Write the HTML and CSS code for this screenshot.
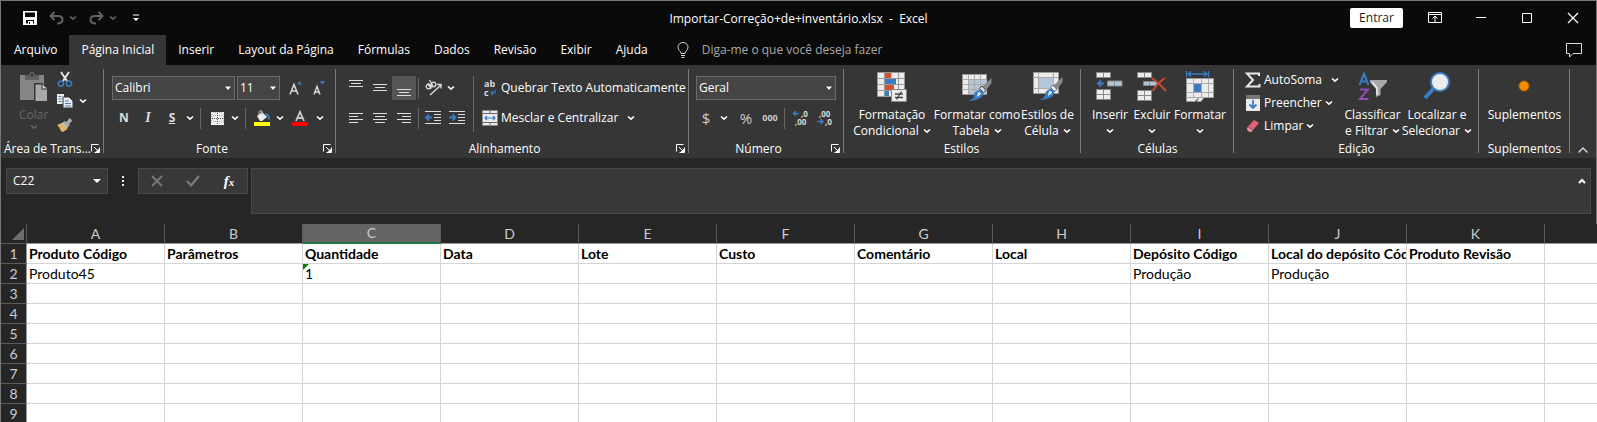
FILE: index.html
```html
<!DOCTYPE html>
<html lang="pt-BR">
<head>
<meta charset="utf-8">
<title>Importar-Correção+de+inventário.xlsx - Excel</title>
<link rel="stylesheet" href="styles.css">
</head>
<body>
<svg class="symbols" aria-hidden="true">
  <symbol id="chev" viewBox="0 0 8 8"><path d="M1 2.5 4 5.2 7 2.5" fill="none" stroke="currentColor" stroke-width="1.6"/></symbol>
  <symbol id="tri" viewBox="0 0 8 8"><path d="M1 2.5h6L4 6z" fill="currentColor"/></symbol>
  <symbol id="launch" viewBox="0 0 9 9"><path d="M.5 7.500V.5h7M3 3l4 4M8.500 3.500v5h-5" fill="none" stroke="currentColor"/><path d="M8 4.500V8H4.500z" fill="currentColor"/></symbol>
</svg>

<div class="window">
  <header class="titlebar">
    <div class="quick">
      <button class="qbtn" aria-label="Salvar"><svg width="14" height="14" viewBox="0 0 14 14"><path fill-rule="evenodd" fill="#fff" d="M0 0h14v14H0zM2 1.500v4.500h10V1.500zM3 9v3.500h2V10h5v2.500h1V9zM6 11v2h1v-2z"/></svg></button>
      <button class="qbtn dim" aria-label="Desfazer"><svg width="15" height="14" viewBox="0 0 15 14"><path d="M5.500 1 1.500 5l4 4M1.500 5H9c3 0 4.500 1.500 4.500 3.700S11.500 12.500 8 12.500" fill="none" stroke="#636363" stroke-width="2"/></svg><svg width="8" height="8"><use href="#chev"/></svg></button>
      <button class="qbtn dim" aria-label="Refazer"><svg width="15" height="14" viewBox="0 0 15 14"><path d="m9.500 1 4 4-4 4M13.500 5H6C3 5 1.500 6.500 1.500 8.700s2 3.800 5.500 3.800" fill="none" stroke="#636363" stroke-width="2"/></svg><svg width="8" height="8"><use href="#chev"/></svg></button>
      <button class="qbtn" aria-label="Personalizar barra"><svg width="6" height="8" viewBox="0 0 6 8"><path d="M0 1h6" stroke="#fff" /><path d="M0 4h6L3 7z" fill="#fff"/></svg></button>
    </div>
    <div class="doc-title">Importar-Correção+de+inventário.xlsx&nbsp; -&nbsp; Excel</div>
    <div class="controls">
      <button class="signin">Entrar</button>
      <button class="wbtn" aria-label="Opções da faixa"><svg width="14" height="12" viewBox="0 0 14 12"><path d="M.5.5h13v10H.5zM.5 2.500h13M7 10V4M4.500 6.500 7 4l2.500 2.500" fill="none" stroke="#fff"/></svg></button>
      <button class="wbtn" aria-label="Minimizar"><svg width="10" height="10" viewBox="0 0 10 10"><path d="M0 4.500h10" stroke="#fff"/></svg></button>
      <button class="wbtn" aria-label="Maximizar"><svg width="10" height="10" viewBox="0 0 10 10"><path d="M.5.5h9v9h-9z" fill="none" stroke="#fff"/></svg></button>
      <button class="wbtn" aria-label="Fechar"><svg width="10" height="10" viewBox="0 0 10 10"><path d="m0 0 10 10M10 0 0 10" stroke="#fff" stroke-width="1.200"/></svg></button>
    </div>
  </header>

  <nav class="tabs">
    <button class="tab">Arquivo</button>
    <button class="tab active">Página Inicial</button>
    <button class="tab">Inserir</button>
    <button class="tab">Layout da Página</button>
    <button class="tab">Fórmulas</button>
    <button class="tab">Dados</button>
    <button class="tab">Revisão</button>
    <button class="tab">Exibir</button>
    <button class="tab">Ajuda</button>
    <button class="tell"><svg width="12" height="16" viewBox="0 0 12 16"><path d="M4 11.500C4 9 1 8.500 1 5.200a5 4.700 0 0 1 10 0C11 8.500 8 9 8 11.500zM4 13.500h4M4.500 15.500h3" fill="none" stroke="#d0d0d0"/></svg>Diga-me o que você deseja fazer</button>
    <button class="comment" aria-label="Comentários"><svg width="16" height="15" viewBox="0 0 16 15"><path d="M.5.5h15v10H7L3.500 14v-3.500h-3z" fill="none" stroke="#ddd"/></svg></button>
  </nav>

  <section class="ribbon">
    <div class="group">
      <div class="body clip">
        <button class="big paste"><svg width="28" height="30" viewBox="0 0 28 30"><path d="M0 3h24v25H0z" fill="#868688"/><path d="M5 3h4c0-4 6-4 6 0h4v5H5z" fill="#606060"/><circle cx="12" cy="3" r="1.500" fill="#363636"/><path d="M14 11h8l6 6v13H14z" fill="#363636"/><path d="M15.500 12.500h6v5h5.500v11.500H15.500z" fill="#a8a8aa"/><path d="m22.500 12.500 4.500 4h-4.500z" fill="#d0d0d0"/></svg><span>Colar</span><svg width="8" height="8"><use href="#chev"/></svg></button>
        <div class="clip-tools">
          <button aria-label="Recortar"><svg width="16" height="16" viewBox="0 0 16 16"><path d="M4 1l6 9M12 1 6 10" stroke="#e4e4e4" stroke-width="2"/><circle cx="4" cy="12.500" r="2.600" fill="none" stroke="#3a7cc4" stroke-width="1.500"/><circle cx="12" cy="12.500" r="2.600" fill="none" stroke="#3a7cc4" stroke-width="1.500"/></svg></button>
          <button aria-label="Copiar"><svg width="16" height="16" viewBox="0 0 16 16"><path d="M0 1h7v10H0z" fill="#ececec"/><path d="M6 4h6l4 4v7H6z" fill="#ececec" stroke="#363636"/><path d="M1.500 3.500h3M1.500 6h3M1.500 8.500h3M8 8h4M8 10.500h6M8 13h6" stroke="#3a7cc4"/></svg><svg width="8" height="8"><use href="#chev"/></svg></button>
          <button aria-label="Pincel de formatação"><svg width="16" height="16" viewBox="0 0 16 16"><path d="M12.500 1 15.500 3.500 12 7l1 1-3 3-5-5 2.500-2 2 1z" fill="#aaa"/><path d="m4.500 6 6 6L6 15l-2-1-2-4-2-2z" fill="#e2b76c"/><path d="m5 6 5.500 5" stroke="#eee"/></svg></button>
        </div>
      </div>
      <div class="label">Área de Trans...</div>
      <button class="launcher" aria-label="Mais opções"><svg width="9" height="9"><use href="#launch"/></svg></button>
    </div>

    <div class="group">
      <div class="body lines font">
        <div class="row">
          <label class="pick name"><select aria-label="Fonte"><option>Calibri</option></select><svg width="8" height="8"><use href="#tri"/></svg></label>
          <label class="pick size"><select aria-label="Tamanho"><option>11</option></select><svg width="8" height="8"><use href="#tri"/></svg></label>
          <button class="grow" aria-label="Aumentar fonte"><svg width="14" height="16" viewBox="0 0 14 16"><path d="m1 14.500 4-10 4 10M2.500 11h5" fill="none" stroke="#ddd" stroke-width="1.500"/><path d="M8 4.500h5L10.500 1z" fill="#3a7cc4"/></svg></button>
          <button class="grow" aria-label="Diminuir fonte"><svg width="14" height="16" viewBox="0 0 14 16"><path d="m1 14.500 3-8 3 8M2 12h4" fill="none" stroke="#ddd" stroke-width="1.400"/><path d="M7 1h5l-2.500 3.500z" fill="#3a7cc4"/></svg></button>
        </div>
        <div class="row">
          <button class="w24 b">N</button><button class="w24 i">I</button><button class="w24 u">S</button><button class="w12"><svg width="8" height="8"><use href="#chev"/></svg></button><i class="sep"></i>
          <button class="w24" aria-label="Bordas"><svg width="13" height="13" viewBox="0 0 13 13"><path d="M0 0h13v13H0z" fill="#eee"/><path d="M2 .5h10M.5 2v9M12.500 2v9M2 3.500h9M2 9.500h9" stroke="#888" stroke-width=".6" stroke-dasharray="1 1"/><path d="M1 6.500h11M6.500 1v11" stroke="#555" stroke-dasharray="1 1"/><path d="M0 12.500h13" stroke="#fff"/></svg></button><button class="w12"><svg width="8" height="8"><use href="#chev"/></svg></button><i class="sep"></i>
          <button class="w24" aria-label="Cor de preenchimento"><svg width="17" height="16" viewBox="0 0 17 16"><path d="M3 6 8 2l5 5-5 4H6z" fill="#ececec"/><path d="M5 5V2q0-2 3-1v4" fill="none" stroke="#bbb"/><path d="M11 4.500q4-.5 4 5" fill="none" stroke="#3a7cc4" stroke-width="2"/><path d="M0 12h16v4H0z" fill="#ff0"/></svg></button><button class="w12"><svg width="8" height="8"><use href="#chev"/></svg></button>
          <button class="w28" aria-label="Cor da fonte"><svg width="16" height="16" viewBox="0 0 16 16"><path d="M4 11 8 2l4 9M5.500 8h5" fill="none" stroke="#ccc" stroke-width="1.800"/><path d="M0 12h16v4H0z" fill="red"/></svg></button><button class="w12"><svg width="8" height="8"><use href="#chev"/></svg></button>
        </div>
      </div>
      <div class="label shared">Fonte</div>
      <button class="launcher" aria-label="Mais opções"><svg width="9" height="9"><use href="#launch"/></svg></button>
    </div>

    <div class="group">
      <div class="body align">
        <div class="lines">
          <div class="row">
            <button class="w24" aria-label="Alinhar em cima"><svg width="14" height="18" viewBox="0 0 14 18"><path d="M0 1.500h14M2 4.500h10M0 7.500h14" stroke="#ddd"/></svg></button>
            <button class="w24" aria-label="Alinhar no meio"><svg width="14" height="18" viewBox="0 0 14 18"><path d="M0 5.500h14M2 8.500h10M0 11.500h14" stroke="#ddd"/></svg></button>
            <button class="w24 pressed" aria-label="Alinhar embaixo"><svg width="14" height="18" viewBox="0 0 14 18"><path d="M0 10.500h14M2 13.500h10M0 16.500h14" stroke="#ddd"/></svg></button><i class="sep"></i>
            <button class="w24" aria-label="Orientação"><svg width="17" height="16" viewBox="0 0 17 16"><g fill="none" stroke="#ddd" stroke-width="1.300"><circle cx="3.500" cy="6.500" r="2.300"/><path d="m2.500 3.500 4 5"/><circle cx="8.500" cy="4.500" r="2.300"/><path d="M4.500 0 8 6M5 15 16 5M12 4.500h4v4"/></g></svg></button><button class="w12"><svg width="8" height="8"><use href="#chev"/></svg></button>
          </div>
          <div class="row">
            <button class="w24" aria-label="Esquerda"><svg width="14" height="12" viewBox="0 0 14 12"><path d="M0 1.500h14M0 4.500h9M0 7.500h14M0 10.500h9" stroke="#ddd"/></svg></button>
            <button class="w24" aria-label="Centro"><svg width="14" height="12" viewBox="0 0 14 12"><path d="M0 1.500h14M2 4.500h10M0 7.500h14M2 10.500h10" stroke="#ddd"/></svg></button>
            <button class="w24" aria-label="Direita"><svg width="14" height="12" viewBox="0 0 14 12"><path d="M0 1.500h14M5 4.500h9M0 7.500h14M5 10.500h9" stroke="#ddd"/></svg></button><i class="sep"></i>
            <button class="w24" aria-label="Diminuir recuo"><svg width="16" height="14" viewBox="0 0 16 14"><path d="M0 .5h16M9 3.500h7M9 6.500h7M9 9.500h7M0 12.500h16" stroke="#ddd"/><path d="M7 6.500H1.500M4 3.500l-3 3 3 3" fill="none" stroke="#3a7cc4" stroke-width="2"/></svg></button>
            <button class="w24" aria-label="Aumentar recuo"><svg width="16" height="14" viewBox="0 0 16 14"><path d="M0 .5h16M9 3.500h7M9 6.500h7M9 9.500h7M0 12.500h16" stroke="#ddd"/><path d="M0 6.500h6M3.500 3.500l3 3-3 3" fill="none" stroke="#3a7cc4" stroke-width="2"/></svg></button>
          </div>
        </div>
        <i class="sep tall"></i>
        <div class="lines wide">
          <button class="row"><svg width="16" height="18" viewBox="0 0 16 18"><text x="2" y="8" class="glyph">ab</text><text x="2" y="17" class="glyph">c</text><path d="M13 11v3H9M11 12l-2 2 2 2" fill="none" stroke="#3a7cc4" stroke-width="1.200"/></svg>Quebrar Texto Automaticamente</button>
          <button class="row"><svg width="16" height="16" viewBox="0 0 16 16"><path d="M.5.5h15v15H.5z" fill="#ececec" stroke="#888"/><path d="M1 3.500h14M1 12.500h14M8 1v2M8 13v2" stroke="#666"/><path d="M3 8h10M5 6 3 8l2 2M11 6l2 2-2 2" fill="none" stroke="#3a7cc4" stroke-width="1.200"/></svg>Mesclar e Centralizar<svg class="far" width="8" height="8"><use href="#chev"/></svg></button>
        </div>
      </div>
      <div class="label shared">Alinhamento</div>
      <button class="launcher" aria-label="Mais opções"><svg width="9" height="9"><use href="#launch"/></svg></button>
    </div>

    <div class="group">
      <div class="body lines number">
        <div class="row"><label class="pick general"><select aria-label="Formato"><option>Geral</option></select><svg width="8" height="8"><use href="#tri"/></svg></label></div>
        <div class="row">
          <button class="w20 sym">$</button><button class="w16"><svg width="8" height="8"><use href="#chev"/></svg></button><button class="w28 sym">%</button><button class="w20 zeros">000</button><i class="sep"></i>
          <button class="w24" aria-label="Aumentar casas"><svg width="16" height="16" viewBox="0 0 16 16"><text x="8" y="7" class="digits">,0</text><text x="2" y="15" class="digits">,00</text><path d="M6 3.500H.5M3 1 .5 3.500 3 6" fill="none" stroke="#3a7cc4" stroke-width="1.500"/></svg></button>
          <button class="w24" aria-label="Diminuir casas"><svg width="16" height="16" viewBox="0 0 16 16"><text x="2" y="7" class="digits">,00</text><text x="8" y="15" class="digits">,0</text><path d="M0 11.500h6M3.500 9 6 11.500 3.500 14" fill="none" stroke="#3a7cc4" stroke-width="1.500"/></svg></button>
        </div>
      </div>
      <div class="label shared">Número</div>
      <button class="launcher" aria-label="Mais opções"><svg width="9" height="9"><use href="#launch"/></svg></button>
    </div>

    <div class="group">
      <div class="body styles">
        <button class="big"><svg width="30" height="30" viewBox="0 0 30 30"><path d="M.5.5h27v24H.5z" fill="#ececec" stroke="#999"/><path d="M7.500 0v24M21.500 0v24M14 0v6M0 6.500h28M0 12.500h28M0 18.500h28" stroke="#999"/><path d="M8 1h6v5H8zM8 13h9v5H8z" fill="#d35230"/><path d="M8 7h11v5H8zM8 19h4v5H8z" fill="#3a7cc4"/><path d="M14.500 17.500h15v12h-15z" fill="#ececec" stroke="#888"/><path d="M18 22h8M18 25.500h8M24.500 19.500l-5 8" stroke="#444" stroke-width="1.300"/></svg><span>Formatação<br>Condicional<svg width="8" height="8"><use href="#chev"/></svg></span></button>
        <button class="big"><svg width="30" height="30" viewBox="0 0 30 30"><path d="M.5 2.500h24v20H.5z" fill="#ececec" stroke="#999"/><path d="M7 8h18v14H7z" fill="#b3c6da"/><path d="M6.500 2v20M12.500 2v20M18.500 2v20M0 7.500h25M0 12.500h25M0 17.500h25" stroke="#aaa"/><path d="M29.500 6 20 15l3.500 4 6-8z" fill="#888"/><path d="m20 14 4 4.500-2.500 2-4-4z" fill="#ddd" stroke="#444"/><path d="M17 18q4 0 4.500 3-.5 7-15.500 8 6-2 6-6 1-4 5-5z" fill="#3a7cc4"/><path d="M16 20q3 0 3 2l-4 3z" fill="#e8f0fa"/></svg><span>Formatar como<br>Tabela<svg width="8" height="8"><use href="#chev"/></svg></span></button>
        <button class="big"><svg width="30" height="30" viewBox="0 0 30 30"><path d="M.5.5h25v21H.5z" fill="#ececec" stroke="#999"/><path d="M5 6h15v11H5z" fill="#b3c6da"/><path d="M5.500 0v22M20.500 0v22M0 5.500h25M0 16.500h25" stroke="#aaa"/><path d="M29.500 5 20 14l3.500 4 6-8z" fill="#888"/><path d="m20 13 4 4.500-2.500 2-4-4z" fill="#eee" stroke="#666"/><path d="M17 17q4 0 4.500 3-.5 7-15.500 8 6-2 6-6 1-4 5-5z" fill="#3a7cc4"/><path d="M16 19q3 0 3 2l-4 3z" fill="#e8f0fa"/></svg><span>Estilos de<br>Célula<svg width="8" height="8"><use href="#chev"/></svg></span></button>
      </div>
      <div class="label">Estilos</div>
    </div>

    <div class="group">
      <div class="body cells">
        <button class="big"><svg width="28" height="30" viewBox="0 0 28 30"><path d="M.5.500h14v5H.5zM.5 17.500h14v10H.5zM.5 22.500h14M7.500.5v5M7.500 17.500v10" fill="#ececec" stroke="#888"/><path d="M11.500 9h14.500v5H11.500zM18.500 9v5" fill="#b3c6da" stroke="#888"/><path d="M8 11.500H2M5 8.500l-3 3 3 3" fill="none" stroke="#3a7cc4" stroke-width="1.800"/></svg><span>Inserir<br><svg width="8" height="8"><use href="#chev"/></svg></span></button>
        <button class="big"><svg width="30" height="30" viewBox="0 0 30 30"><path d="M.5.500h14v5H.5zM.5 18.500h14v10H.5zM.5 23.500h14M7.500.5v5M7.500 18.500v10" fill="#ececec" stroke="#888"/><path d="M6.500 9.500H20v4H6.500zM12.500 9.500v4" fill="#b3c6da" stroke="#888"/><path d="M15 6q8 6 14 13M28 6Q20 11 16 19" fill="none" stroke="#c8492c" stroke-width="2"/></svg><span>Excluir<br><svg width="8" height="8"><use href="#chev"/></svg></span></button>
        <button class="big"><svg width="28" height="32" viewBox="0 0 28 32"><path d="M.5 0v6M22.500 0v6M2 3h19M5 .5 2 3l3 2.500M18 .5 21 3l-3 2.500" fill="none" stroke="#3a7cc4" stroke-width="1.300"/><path d="M.5 7.500h27v19H18l-3 4h-4l2-4-4 4H.5z" fill="#ececec" stroke="#999"/><path d="M7.500 7v20M15.500 7v20M22.500 7v20M0 12.500h28M0 21.500h28M0 26.500h28" stroke="#aaa"/><path d="M8 13h7v8H8z" fill="#3a7cc4"/></svg><span>Formatar<br><svg width="8" height="8"><use href="#chev"/></svg></span></button>
      </div>
      <div class="label">Células</div>
    </div>

    <div class="group">
      <div class="body edit">
        <div class="stack">
          <button><svg width="16" height="16" viewBox="0 0 16 16"><path d="M14 4V1.500H2L8 8l-6 6.500h12.500V12" fill="none" stroke="#e8e8e8" stroke-width="2"/></svg>AutoSoma<svg class="far" width="8" height="8"><use href="#chev"/></svg></button>
          <button><svg width="16" height="16" viewBox="0 0 16 16"><path d="M1 0h14v16H1z" fill="#ececec"/><path d="M1 0h14v4H1z" fill="#777"/><path d="M8 5v8M4.500 9.500 8 13l3.500-3.500" fill="none" stroke="#3a7cc4" stroke-width="1.800"/></svg>Preencher<svg width="8" height="8"><use href="#chev"/></svg></button>
          <button><svg width="16" height="16" viewBox="0 0 16 16"><path d="m9 2 5 3-6 7-5-3.500z" fill="#e0637b"/><path d="m3 9 5 3.500L6 14q-4 0-4-4z" fill="#f08c9f"/></svg>Limpar<svg width="8" height="8"><use href="#chev"/></svg></button>
        </div>
        <button class="big"><svg width="30" height="30" viewBox="0 0 30 30"><path d="M1.500 13 6 2l4.500 11M3 9.500h6" fill="none" stroke="#3a7cc4" stroke-width="2"/><path d="M2 17.500h8L2 27h8.500" fill="none" stroke="#8e4fb0" stroke-width="2"/><path d="M12 8h17v2l-6.500 7v6L18 25v-8l-6-7z" fill="#a8a8aa"/><path d="m14 10 5 6v7" fill="none" stroke="#eee" stroke-width="1.500"/></svg><span>Classificar<br>e Filtrar<svg width="8" height="8"><use href="#chev"/></svg></span></button>
        <button class="big"><svg width="28" height="30" viewBox="0 0 28 30"><path d="m12 15-10 11" stroke="#3a7cc4" stroke-width="4"/><circle cx="17" cy="10" r="9" fill="#ececec" stroke="#3a7cc4" stroke-width="2"/></svg><span>Localizar e<br>Selecionar<svg width="8" height="8"><use href="#chev"/></svg></span></button>
      </div>
      <div class="label">Edição</div>
    </div>

    <div class="group">
      <div class="body center">
        <button class="big"><svg width="28" height="30" viewBox="0 0 28 30"><circle cx="14" cy="14" r="5.500" fill="#a85c00"/><circle cx="14" cy="14" r="4.500" fill="#f58b00"/></svg><span>Suplementos</span></button>
      </div>
      <div class="label">Suplementos</div>
    </div>
    <button class="collapse" aria-label="Recolher"><svg width="10" height="6" viewBox="0 0 10 6"><path d="m.5 5.500 4.500-4.500 4.500 4.500" fill="none" stroke="#ddd" stroke-width="1.300"/></svg></button>
  </section>

  <section class="formula">
    <button class="namebox">C22<svg width="8" height="6" viewBox="0 0 8 6"><path d="M0 1h8L4 5z" fill="#fff"/></svg></button>
    <svg class="dots" width="2" height="12" viewBox="0 0 2 12"><path d="M0 1h2v2H0zM0 5h2v2H0zM0 9h2v2H0z" fill="#eee"/></svg>
    <div class="fxbox">
      <button aria-label="Cancelar"><svg width="12" height="12" viewBox="0 0 12 12"><path d="m1 1 10 10M11 1 1 11" stroke="#777" stroke-width="2"/></svg></button>
      <button aria-label="Inserir"><svg width="14" height="12" viewBox="0 0 14 12"><path d="m1 6 4 4.500L13 1" fill="none" stroke="#777" stroke-width="2.400"/></svg></button>
      <button class="fx" aria-label="Inserir função">f<small>x</small></button>
    </div>
    <div class="entry"><input type="text" aria-label="Barra de fórmulas"><button aria-label="Recolher barra"><svg width="8" height="6" viewBox="0 0 8 6"><path d="m1 5 3-3 3 3" fill="none" stroke="#fff" stroke-width="2"/></svg></button></div>
  </section>

  <table class="sheet">
    <colgroup><col class="rowcol"><col span="11" class="datacol"><col></colgroup>
    <thead>
      <tr><th class="corner"><svg width="12" height="12" viewBox="0 0 12 12"><path d="M12 0v12H0z" fill="#6e6e6e"/></svg></th><th>A</th><th>B</th><th class="selected">C</th><th>D</th><th>E</th><th>F</th><th>G</th><th>H</th><th>I</th><th>J</th><th>K</th><th></th></tr>
    </thead>
    <tbody>
      <tr class="heads"><th>1</th><td>Produto Código</td><td>Parâmetros</td><td>Quantidade</td><td>Data</td><td>Lote</td><td>Custo</td><td>Comentário</td><td>Local</td><td>Depósito Código</td><td>Local do depósito Cód</td><td>Produto Revisão</td><td></td></tr>
      <tr><th>2</th><td>Produto45</td><td></td><td class="flag">1</td><td></td><td></td><td></td><td></td><td></td><td>Produção</td><td>Produção</td><td></td><td></td></tr>
      <tr><th>3</th><td></td><td></td><td></td><td></td><td></td><td></td><td></td><td></td><td></td><td></td><td></td><td></td></tr>
      <tr><th>4</th><td></td><td></td><td></td><td></td><td></td><td></td><td></td><td></td><td></td><td></td><td></td><td></td></tr>
      <tr><th>5</th><td></td><td></td><td></td><td></td><td></td><td></td><td></td><td></td><td></td><td></td><td></td><td></td></tr>
      <tr><th>6</th><td></td><td></td><td></td><td></td><td></td><td></td><td></td><td></td><td></td><td></td><td></td><td></td></tr>
      <tr><th>7</th><td></td><td></td><td></td><td></td><td></td><td></td><td></td><td></td><td></td><td></td><td></td><td></td></tr>
      <tr><th>8</th><td></td><td></td><td></td><td></td><td></td><td></td><td></td><td></td><td></td><td></td><td></td><td></td></tr>
      <tr><th>9</th><td></td><td></td><td></td><td></td><td></td><td></td><td></td><td></td><td></td><td></td><td></td><td></td></tr>
    </tbody>
  </table>
</div>
</body>
</html>
```
FILE: styles.css
```css
* { box-sizing: border-box; }
html { overflow: hidden; }
body { margin: 0; background: #262626; color: #fff; font: 12px/16px "Open Sans", "Noto Sans", sans-serif; }
button { margin: 0; padding: 0; border: 0; background: none; color: inherit; font: inherit; white-space: nowrap; }
svg { display: block; flex: none; overflow: visible; }
.symbols { position: absolute; width: 0; height: 0; }
.window { border-top: 1px solid #777; }

.titlebar { display: grid; grid-template-columns: 1fr auto 1fr; align-items: center; height: 34px; background: #0a0a0a; border-left: 1px solid #777; border-right: 1px solid #777; }
.quick { display: flex; align-items: center; gap: 12px; padding-left: 22px; }
.qbtn { display: flex; align-items: center; gap: 5px; height: 24px; }
.qbtn:last-child { margin-left: 4px; }
.dim { color: #636363; }
.doc-title { padding-top: 2px; }
.controls { display: flex; justify-content: flex-end; align-items: center; }
.signin { width: 53px; height: 20px; margin-right: 9px; background: #fff; color: #222; border-radius: 2px; }
.wbtn { display: grid; place-items: center; width: 46px; height: 30px; }

.tabs { display: flex; height: 30px; padding-left: 1px; background: #0a0a0a; border-left: 1px solid #777; border-right: 1px solid #777; }
.tab { padding: 0 12px; }
.tab.active { background: #363636; }
.tell { display: flex; align-items: center; gap: 13px; margin-left: 17px; color: #a8a8a8; }
.comment { margin-left: auto; padding-right: 14px; }

.ribbon { display: grid; grid-template-columns: 103px 232px 353px 155px 237px 153px 245px 91px 1fr; height: 93px; background: #363636; border-left: 1px solid #777; border-right: 1px solid #777; }
.group { position: relative; display: grid; grid-template-rows: 76px 16px; min-width: 0; }
.group::after { content: ""; position: absolute; top: 4px; bottom: 5px; right: 0; width: 1px; background: #7a7a7a; }
.label { text-align: center; }
.shared { padding-right: 16px; }
.launcher { position: absolute; right: 4px; bottom: 5px; }
.body { display: flex; min-width: 0; }
.body button { display: flex; align-items: center; justify-content: center; }
.body .big { flex-direction: column; justify-content: flex-start; line-height: 16px; }
.big > svg:first-child { height: 32px; margin-bottom: 4px; }
.big span { text-align: center; }
.big span svg { display: inline-block; margin-left: 4px; }
.cells .big span svg { margin-left: 0; }

.clip { padding: 6px 0 0 18px; gap: 9px; }
.body .paste { color: #666; }
.clip-tools { display: grid; grid-template-rows: 16px 28px 20px; justify-items: start; }
.clip-tools button { gap: 6px; }
.clip .paste, .clip-tools { height: 68px; }
.clip + .label { padding-left: 3px; text-align: left; }

.lines { display: grid; grid-template-rows: 24px 24px; row-gap: 6px; align-content: start; }
.body.lines, .align { padding-top: 11px; }
.row { display: flex; align-items: center; height: 24px; }
.font { padding-left: 8px; }
.number { padding-left: 7px; }
.pick { position: relative; display: flex; height: 24px; }
.pick select { width: 100%; padding: 0 2px; appearance: none; border: 1px solid #6a6a6a; border-radius: 0; background: #444; color: #fff; font: inherit; }
.pick svg { position: absolute; right: 3px; top: 8px; }
.name { width: 123px; margin-right: 2px; }
.size { width: 43px; margin-right: 4px; }
.general { width: 140px; }
.grow { width: 24px; }
.w12 { width: 12px; height: 24px; }
.w16 { width: 16px; height: 24px; }
.w20 { width: 20px; height: 24px; }
.w24 { width: 24px; height: 24px; }
.w28 { width: 28px; height: 24px; }
.row .b, .row .u { font-weight: 700; color: #ddd; }
.row .i { font: italic 700 14px "Liberation Serif", serif; color: #ddd; }
.row .u { text-decoration: underline; }
.pressed { background: #555; }
.sep { flex: none; width: 1px; height: 21px; background: #666; margin: 0 4px; }
.align .sep { margin: 0 2px; }
.align .tall { height: 56px; margin: 0 8px 0 4px; }
.align { padding-left: 8px; }
.align .wide .row { justify-content: flex-start; gap: 3px; }
.far { margin-left: 6px; }
.glyph { font: 700 9px "Open Sans", sans-serif; fill: #ddd; }
.digits { font: 700 8px "Open Sans", sans-serif; fill: #ddd; }
.row .sym { font-size: 15px; color: #ccc; }
.row .zeros { font-size: 9px; font-weight: 700; color: #ccc; }
.styles { padding: 6px 0 0 5px; display: grid; grid-template-columns: 86px 84px 57px; }
.styles + .label { padding-right: 2px; }
.cells { padding: 6px 0 0 8px; display: grid; grid-template-columns: 42px 42px 54px; }
.edit { padding: 3px 0 0 11px; display: grid; grid-template-columns: 96px 63px 66px; }
.edit > .big { padding-top: 3px; }
.stack { display: grid; grid-template-rows: 23px 23px 23px; justify-items: start; align-content: start; }
.stack button { gap: 3px; }
.center { justify-content: center; padding-top: 6px; }
.collapse { align-self: end; justify-self: start; padding: 0 0 5px 8px; }

.formula { display: grid; grid-template-columns: 102px 30px 110px 1fr; align-items: start; height: 66px; padding: 10px 5px 0; border: solid #777; border-width: 0 1px; background: #262626; }
.namebox { display: flex; align-items: center; justify-content: space-between; height: 26px; padding: 0 6px; border: 1px solid #484848; background: #383838; }
.dots { justify-self: center; margin-top: 7px; }
.fxbox { display: grid; grid-template-columns: 1fr 1fr 1fr; height: 26px; border: 1px solid #484848; background: #383838; }
.fxbox button { display: grid; place-items: center; }
.fxbox .fx { display: block; font: italic 700 15px "Liberation Serif", serif; }
.fx small { font-size: 11px; }
.entry { display: flex; align-items: flex-start; height: 46px; margin-left: 3px; border: 1px solid #484848; background: #383838; }
.entry input { flex: 1; min-width: 0; height: 100%; border: 0; outline: 0; background: none; color: #fff; font: inherit; }
.entry button { padding: 9px 4px; }

.sheet { width: 100%; table-layout: fixed; border-collapse: separate; border-spacing: 0; border-left: 1px solid #777; background: #fff; color: #000; font: 14px/19px Lato, "Open Sans", sans-serif; }
.rowcol { width: 26px; }
.datacol { width: 138px; }
.sheet th { height: 20px; padding: 0; border-right: 1px solid #5a5a5a; border-bottom: 1px solid #5a5a5a; background: #262626; color: #ccc; font-weight: 400; }
.sheet tbody th { border-right-color: #999; }
.sheet thead th { border-bottom-color: #999; }
.sheet thead th.corner { border-bottom-color: #5a5a5a; }
.corner svg { margin-left: 11px; }
.sheet thead .selected { background: #646464; border-bottom: 2px solid #217346; line-height: 18px; }
.sheet td { position: relative; height: 20px; padding: 0 0 0 2px; border-right: 1px solid #d4d4d4; border-bottom: 1px solid #d4d4d4; overflow: hidden; white-space: nowrap; }
.sheet td:last-child, .sheet th:last-child:not(:first-child) { border-right: 0; }
.heads td { font-weight: 700; }
.flag::before { content: ""; position: absolute; left: 0; top: 0; border-top: 6px solid #107c10; border-right: 6px solid transparent; }
```
